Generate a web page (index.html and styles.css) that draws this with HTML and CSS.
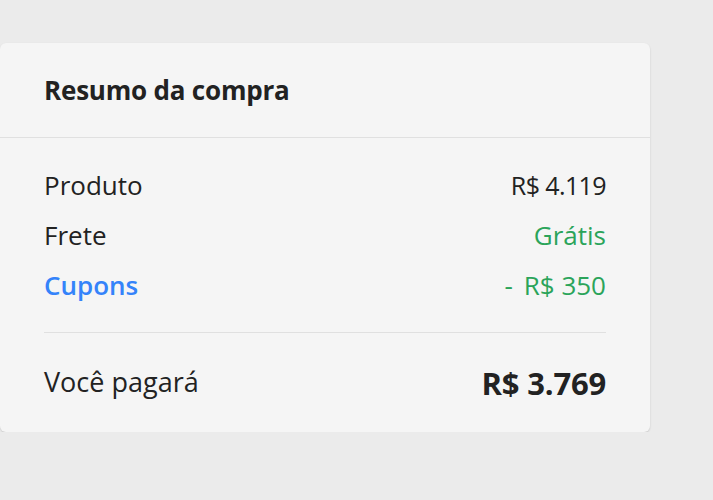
FILE: index.html
```html
<!DOCTYPE html>
<html lang="pt-BR">

<head>
    <meta charset="UTF-8">
    <meta name="viewport" content="width=device-width, initial-scale=1.0">
    <title>Resumo da compra</title>
    <link rel="stylesheet" href="styles.css">
</head>

<body>
    <div class="summary">
        <div class="summary-header">
            <h2>Resumo da compra</h2>
        </div>
        <div class="summary-body">
            <div class="row">
                <span>Produto</span>
                <span class="value">R$ 4.119</span>
            </div>
            <div class="row">
                <span>Frete</span>
                <span class="free">Grátis</span>
            </div>
            <div class="row">
                <span class="coupon">Cupons</span>
                <span class="free"><span class="minus">-</span> R$ 350</span>
            </div>
            <div class="total row">
                <span>Você pagará</span>
                <span class="total-value">R$ 3.769</span>
            </div>
        </div>
    </div>
</body>

</html>
```

FILE: styles.css
```css
body {
    font-family: "Open Sans", Arial, sans-serif;
    margin: 0;
    padding-top: 43px;
    background-color: #ebebeb;
    color: #222;
}

.summary {
    width: 650px;
    background: #f5f5f5;
    border-radius: 6px;
    box-shadow: 0 1px 2px rgba(0, 0, 0, 0.15);
}

.summary-header {
    height: 94px;
    display: flex;
    align-items: center;
    padding: 0 44px;
    border-bottom: 1px solid #e0e0e0;
}

.summary-header h2 {
    margin: 0;
    font-size: 26px;
    font-weight: 700;
    letter-spacing: -0.2px;
}

.summary-body {
    padding: 22px 44px 25px;
}

.row {
    height: 50px;
    display: flex;
    justify-content: space-between;
    align-items: center;
    font-size: 26px;
}

.value {
    font-size: 25px;
    letter-spacing: -0.6px;
}

.free {
    color: #2ba45a;
}

.minus {
    margin-right: 4px;
}

.coupon {
    color: #3483fa;
    font-weight: 600;
}

.total {
    margin-top: 22px;
    padding-top: 22px;
    height: 52px;
    border-top: 1px solid #e0e0e0;
    align-items: center;
    font-size: 27px;
}

.total-value {
    font-size: 31px;
    font-weight: 700;
    letter-spacing: -0.2px;
    margin-top: 4px;
}
```
